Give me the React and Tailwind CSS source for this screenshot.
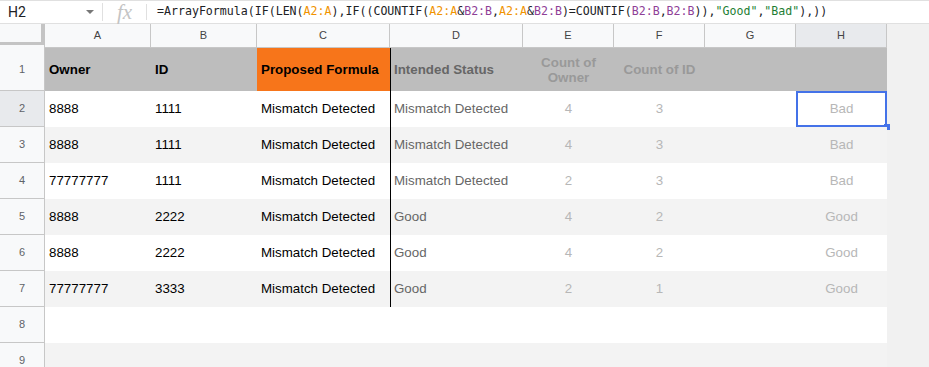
import React from 'react';

const cols = [
  { key: 'A', w: 'w-[106px]' },
  { key: 'B', w: 'w-[106px]' },
  { key: 'C', w: 'w-[133px]' },
  { key: 'D', w: 'w-[133px]' },
  { key: 'E', w: 'w-[91px]' },
  { key: 'F', w: 'w-[91px]' },
  { key: 'G', w: 'w-[91px]' },
  { key: 'H', w: 'w-[91px]' },
];

const rows = [
  ['8888', '1111', 'Mismatch Detected', 'Mismatch Detected', '4', '3', 'Bad'],
  ['8888', '1111', 'Mismatch Detected', 'Mismatch Detected', '4', '3', 'Bad'],
  ['77777777', '1111', 'Mismatch Detected', 'Mismatch Detected', '2', '3', 'Bad'],
  ['8888', '2222', 'Mismatch Detected', 'Good', '4', '2', 'Good'],
  ['8888', '2222', 'Mismatch Detected', 'Good', '4', '2', 'Good'],
  ['77777777', '3333', 'Mismatch Detected', 'Good', '2', '1', 'Good'],
];

const Orange = ({ children }) => <span className="text-[#f09300]">{children}</span>;
const Purple = ({ children }) => <span className="text-[#8f3f97]">{children}</span>;
const Green = ({ children }) => <span className="text-[#1e7e34]">{children}</span>;

const RowHead = ({ n, active, h }) => (
  <div
    className={`w-[45px] shrink-0 ${h} flex items-center justify-center border-r border-b border-[#c7c7c7] text-[11px] text-[#5f6368] ${
      active ? 'bg-[#e8eaed]' : 'bg-[#f8f9fa]'
    }`}
  >
    {n}
  </div>
);

const App = () => {
  return (
    <div className="w-[929px] h-[367px] overflow-hidden bg-[#f1f1f1] font-['Liberation_Sans',Arial,sans-serif] text-[13.33px]">
      {/* Formula bar */}
      <div className="h-[24px] flex items-center bg-white border-t border-[#e0e0e0] border-b border-[#c4c4c4]">
        <div className="w-[102px] flex items-center justify-between pl-[8px] pr-[8px] font-['Roboto',Arial,sans-serif] text-[14px] text-[#202124]">
          <span>H2</span>
          <span className="w-0 h-0 border-l-[4px] border-r-[4px] border-t-[4px] border-l-transparent border-r-transparent border-t-[#777]" />
        </div>
        <div className="w-px h-[18px] bg-[#e0e0e0]" />
        <div className="w-[43px] flex justify-center font-['Liberation_Serif',serif] italic text-[21px] text-[#c4c4c4] leading-none">
          fx
        </div>
        <div className="w-px h-[16px] bg-[#e0e0e0]" />
        <div className="pl-[10px] font-['DejaVu_Sans_Mono',monospace] text-[11.6px] text-[#202124] whitespace-nowrap">
          =ArrayFormula(IF(LEN(<Orange>A2:A</Orange>),IF((COUNTIF(<Orange>A2:A</Orange>&amp;<Purple>B2:B</Purple>,<Orange>A2:A</Orange>&amp;<Purple>B2:B</Purple>)=COUNTIF(<Purple>B2:B</Purple>,<Purple>B2:B</Purple>)),<Green>"Good"</Green>,<Green>"Bad"</Green>),))
        </div>
      </div>

      {/* Column headers */}
      <div className="flex h-[24px]">
        <div className="w-[45px] shrink-0 flex flex-col bg-[#f8f9fa]">
          <div className="h-[21px] border-r-4 border-b-[3px] border-[#c4c4c4]" />
          <div className="h-[3px] border-r border-[#c7c7c7]" />
        </div>
        {cols.map((c) => (
          <div
            key={c.key}
            className={`${c.w} shrink-0 flex items-center justify-center border-r border-b border-[#c7c7c7] text-[11px] text-[#444] ${
              c.key === 'H' ? 'bg-[#e8eaed]' : 'bg-[#f8f9fa]'
            }`}
          >
            {c.key}
          </div>
        ))}
        <div className="flex-1 bg-[#f1f1f1]" />
      </div>

      {/* Row 1 */}
      <div className="flex h-[43px]">
        <RowHead n={1} h="h-[43px]" />
        <div className="w-[106px] shrink-0 bg-[#bdbdbd] flex items-center pl-[4px] font-bold text-black">Owner</div>
        <div className="w-[106px] shrink-0 bg-[#bdbdbd] flex items-center pl-[4px] font-bold text-black">ID</div>
        <div className="w-[133px] shrink-0 bg-[#f7751a] flex items-center pl-[4px] font-bold text-black">Proposed Formula</div>
        <div className="w-[133px] shrink-0 bg-[#bdbdbd] border-l border-black flex items-center pl-[3px] font-bold text-[#666]">Intended Status</div>
        <div className="w-[91px] shrink-0 bg-[#bdbdbd] flex items-center justify-center text-center leading-[15px] font-bold text-[#999]">
          Count of<br />Owner
        </div>
        <div className="w-[91px] shrink-0 bg-[#bdbdbd] flex items-center justify-center font-bold text-[#999]">Count of ID</div>
        <div className="w-[91px] shrink-0 bg-[#bdbdbd]" />
        <div className="w-[91px] shrink-0 bg-[#bdbdbd]" />
        <div className="flex-1" />
      </div>

      {/* Data rows */}
      {rows.map((r, i) => {
        const bg = i % 2 === 0 ? 'bg-white' : 'bg-[#f3f3f3]';
        return (
          <div key={i} className="flex h-[36px]">
            <RowHead n={i + 2} h="h-[36px]" active={i === 0} />
            <div className={`w-[106px] shrink-0 ${bg} flex items-center pl-[4px] text-black`}>{r[0]}</div>
            <div className={`w-[106px] shrink-0 ${bg} flex items-center pl-[4px] text-black`}>{r[1]}</div>
            <div className={`w-[133px] shrink-0 ${bg} flex items-center pl-[4px] text-black`}>{r[2]}</div>
            <div className={`w-[133px] shrink-0 ${bg} border-l border-black flex items-center pl-[3px] text-[#666]`}>{r[3]}</div>
            <div className={`w-[91px] shrink-0 ${bg} flex items-center justify-center text-[#b7b7b7]`}>{r[4]}</div>
            <div className={`w-[91px] shrink-0 ${bg} flex items-center justify-center text-[#b7b7b7]`}>{r[5]}</div>
            <div className={`w-[91px] shrink-0 ${bg}`} />
            <div className={`w-[91px] shrink-0 ${bg} relative flex items-center justify-center text-[#b7b7b7]`}>
              {r[6]}
              {i === 0 && (
                <>
                  <div className="absolute inset-0 border-2 border-[#4472e8]" />
                  <div className="absolute -right-[3px] -bottom-[3px] w-[6px] h-[6px] bg-[#4472e8]" />
                </>
              )}
            </div>
            <div className="flex-1" />
          </div>
        );
      })}

      {/* Empty rows */}
      {[8, 9].map((n) => (
        <div key={n} className="flex h-[36px]">
          <RowHead n={n} h="h-[36px]" />
          <div className={`w-[842px] shrink-0 ${n === 8 ? 'bg-white' : 'bg-[#f3f3f3]'}`} />
          <div className="flex-1" />
        </div>
      ))}
    </div>
  );
};

export default App;
